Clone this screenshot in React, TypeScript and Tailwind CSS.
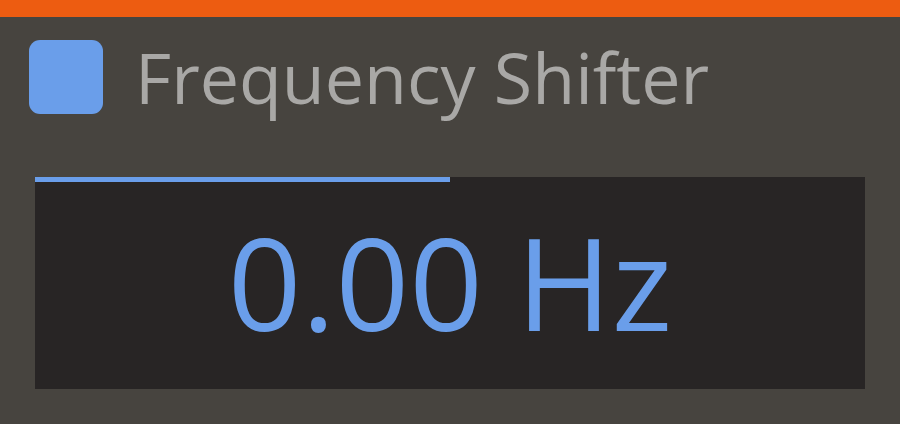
export default function App() {
  return (
    <div className="w-[900px] h-[424px] bg-[#47443f] flex flex-col overflow-hidden" style={{ fontFamily: '"Open Sans", "Noto Sans", sans-serif' }}>
      <div className="h-[17px] bg-[#ed5c11] shrink-0" />
      <div className="flex items-center h-[74px] mt-[23px] pl-[29px]">
        <div className="w-[74px] h-[74px] rounded-[11px] bg-[#6a9eea] shrink-0" />
        <span className="ml-[32px] text-[70px] leading-none text-[#a9a8a6] whitespace-nowrap">Frequency Shifter</span>
      </div>
      <div className="mx-[35px] mt-[63px] h-[212px] bg-[#282525] flex flex-col">
        <div className="h-[5px] w-1/2 bg-[#6a9eea]" />
        <div className="flex-1 flex items-center justify-center pb-[8px]">
          <span className="text-[129px] leading-none text-[#6a9eea] whitespace-nowrap">0.00 Hz</span>
        </div>
      </div>
    </div>
  );
}
